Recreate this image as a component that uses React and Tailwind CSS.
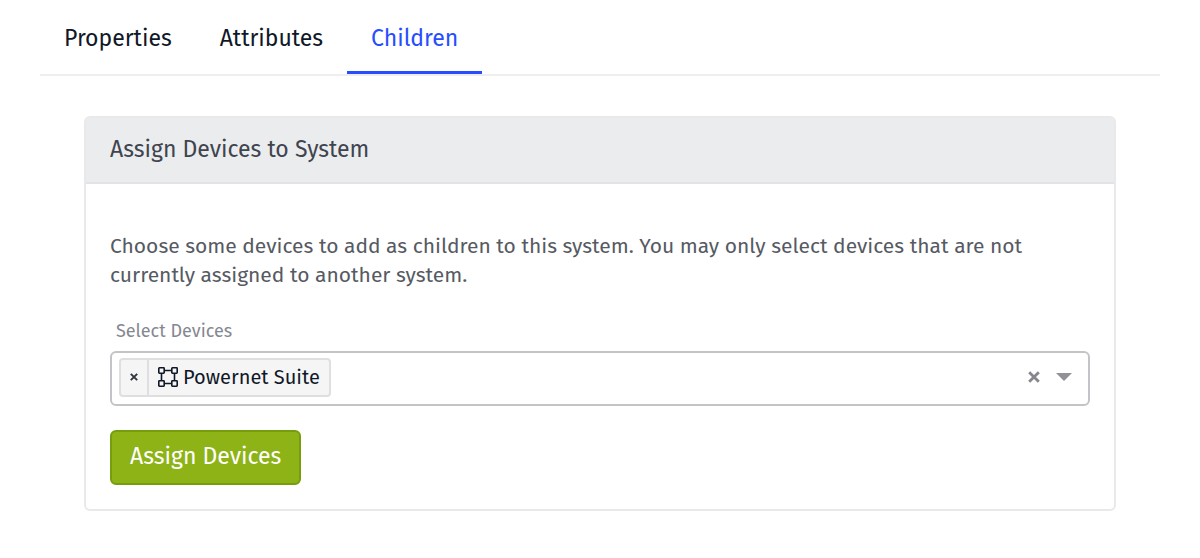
import { useState } from "react";

const tabs = ["Properties", "Attributes", "Children"];

const SystemIcon = () => (
  <svg className="w-5 h-5 shrink-0" viewBox="0 0 20 20" fill="none" stroke="currentColor" strokeWidth="1.6" aria-hidden="true">
    <rect x="0.8" y="0.8" width="5.4" height="5.4" rx="0.6" />
    <rect x="13.8" y="0.8" width="5.4" height="5.4" rx="0.6" />
    <rect x="0.8" y="13.8" width="5.4" height="5.4" rx="0.6" />
    <rect x="13.8" y="13.8" width="5.4" height="5.4" rx="0.6" />
    <path d="M6.2 3.5h7.6M6.2 16.5h7.6M3.5 6.2v7.6M16.5 6.2v7.6" />
  </svg>
);

const App = () => {
  const [active, setActive] = useState("Children");
  const [devices, setDevices] = useState(["Powernet Suite"]);

  return (
    <main className="bg-white px-10 pb-12 text-[#101828] font-['Fira_Sans','Noto_Sans',sans-serif]">
      <nav className="border-b-2 border-[#eeeeef]" role="tablist" aria-label="System">
        <div className="flex">
          {tabs.map((tab) => (
            <button
              key={tab}
              type="button"
              role="tab"
              aria-selected={active === tab}
              onClick={() => setActive(tab)}
              className={`h-[74px] px-6 pt-1 text-[23px] leading-7 border-b-3 ${
                active === tab ? "text-[#264dff] border-[#264dff]" : "border-transparent"
              }`}
            >
              {tab}
            </button>
          ))}
        </div>
      </nav>

      <section className="mx-11 mt-10 border-2 border-[#e8e9eb] rounded-md">
        <h2 className="bg-[#ebecee] border-b-2 border-[#e1e3e5] px-6 pt-[15px] pb-[17px] text-[23px] leading-8 text-[#40444f]">
          Assign Devices to System
        </h2>

        <form className="px-6 pt-12 pb-6" onSubmit={(e) => e.preventDefault()}>
          <p className="max-w-[930px] text-[21px] leading-[29px] text-[#565a63]">
            Choose some devices to add as children to this system. You may only select devices that are not currently
            assigned to another system.
          </p>

          <label htmlFor="devices" className="block mt-7 ml-1.5 text-lg leading-[26px] text-[#858891]">
            Select Devices
          </label>
          <div className="flex items-center mt-[7px] h-[55px] pl-[7px] pr-4 pb-[3px] border-2 border-[#c2c4c7] rounded-md">
            {devices.map((device) => (
              <div key={device} className="flex items-center h-[39px] border-2 border-[#dedfe0] rounded-sm bg-[#f5f5f5]">
                <button
                  type="button"
                  aria-label={`Remove ${device}`}
                  onClick={() => setDevices(devices.filter((d) => d !== device))}
                  className="flex items-center justify-center w-7 h-full border-r-2 border-[#dedfe0]"
                >
                  <svg className="w-2 h-2" viewBox="0 0 8 8" stroke="#30343e" strokeWidth="1.9" aria-hidden="true">
                    <path d="M0.8 0.8l6.4 6.4M7.2 0.8L0.8 7.2" />
                  </svg>
                </button>
                <span className="flex items-center gap-[5px] px-[9px] text-xl whitespace-nowrap">
                  <SystemIcon />
                  {device}
                </span>
              </div>
            ))}
            <input id="devices" type="text" className="flex-1 min-w-0 h-full px-2 text-xl outline-none" />
            <button type="button" aria-label="Clear all" onClick={() => setDevices([])} className="mr-4">
              <svg className="w-3 h-3" viewBox="0 0 12 12" stroke="#85878d" strokeWidth="2.8" aria-hidden="true">
                <path d="M1.2 1.2l9.6 9.6M10.8 1.2L1.2 10.8" />
              </svg>
            </button>
            <button type="button" aria-label="Show devices">
              <svg className="w-4 h-2" viewBox="0 0 16 8" fill="#909297" aria-hidden="true">
                <path d="M0 0h16L8 8z" />
              </svg>
            </button>
          </div>

          <button
            type="submit"
            className="mt-6 h-[55px] px-[18px] pb-1 border-2 border-[#769e0c] rounded-md bg-[#8db317] text-[23px] leading-7 text-white"
          >
            Assign Devices
          </button>
        </form>
      </section>
    </main>
  );
};

export default App;
